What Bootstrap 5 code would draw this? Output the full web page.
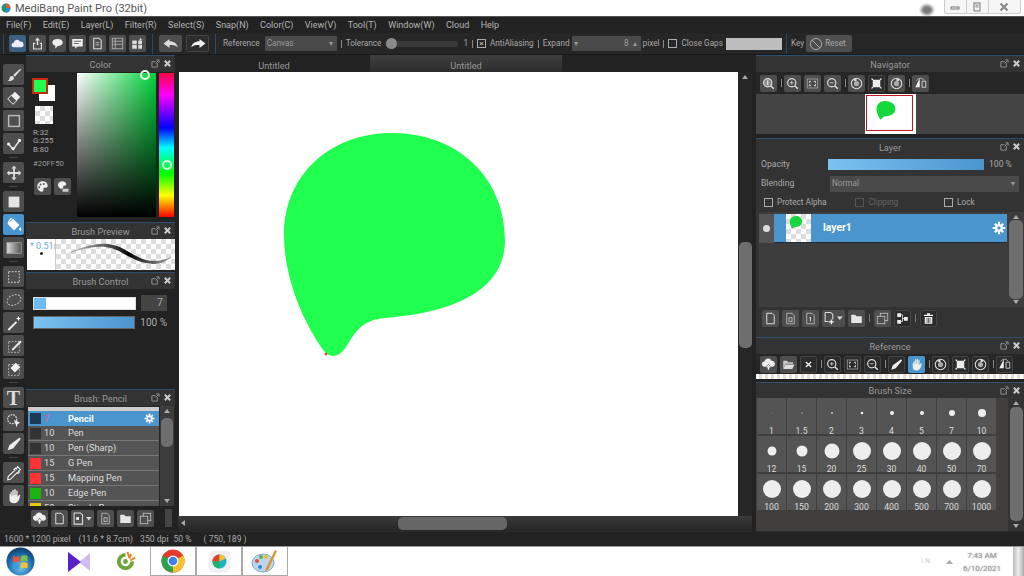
<!DOCTYPE html>
<html lang="en"><head><meta charset="utf-8"><title>MediBang Paint Pro</title>
<link href="https://cdn.jsdelivr.net/npm/bootstrap@5.3.0/dist/css/bootstrap.min.css" rel="stylesheet">
<style>
html,body{width:1024px;height:576px;overflow:hidden;margin:0}
body{background:#222;color:#aaa;font-family:Roboto,"Noto Sans",sans-serif;font-size:9px;line-height:1}
svg{display:block}
.ttl{height:16px;background:#fff;color:#555;font-size:11px;padding-left:1px}
.wctl{height:14px;align-self:flex-start;border:1px solid #ccc;border-top:0;border-radius:0 0 3px 3px;width:77px;margin-right:3px;background:#f6f6f6}
.wctl span{flex:1 1 0;display:flex;align-items:center;justify-content:center;border-right:1px solid #ccc}
.wctl span:last-child{flex:1.5 1 0;border:0}
.smudge{width:12px;height:10px;border-radius:50%;background:#777;filter:blur(1.5px);margin-left:auto;margin-right:11px;margin-top:4px}
.mbar{height:17px;background:#222;color:#b4b4b4;font-size:9px;border-top:1px solid #555;gap:11.4px;padding-left:6px}
.tbar{height:22px;background:#262626;color:#a8a8a8;font-size:8.2px;border-bottom:1px solid #1a1a1a;padding-left:3px;position:relative}
.bsep{width:1px;height:20px;background:#2c4a66}
.psep{width:1px;height:8px;background:#888;margin:0 4px}
.ib{width:17px;height:17px;background:#4e4e4e;border-radius:2px;display:flex;align-items:center;justify-content:center;flex:none}
.ib.dk{background:#2c2c2c;outline:1px solid #444;outline-offset:-1px}
.ib.on{background:#4a95ce}
.ib.cl{background:#3d5f80}
.ib.wide{width:23px}
.gp3{gap:3px}
.ml6{margin-left:6px}.ml7{margin-left:7px}.ml4{margin-left:4px}.ml5{margin-left:5px}.ml2{margin-left:2px}
.sel{background:#4a4a4a;color:#999;height:15px;border-radius:1px;display:flex;align-items:center;padding:0 4px 0 2px;justify-content:space-between;font-size:8.2px}
.sel.rfs{width:72px}
.track{width:73px;height:6px;background:#3a3a3a;border-radius:3px;margin-left:4px;position:relative}
.knob{position:absolute;left:1px;top:-2.5px;width:11px;height:11px;border-radius:50%;background:#8a8a8a}
.cb{width:9px;height:9px;border:1px solid #aaa;flex:none}
.cbx{display:flex;align-items:center;justify-content:center;color:#ccc;font-size:8px}
.num{width:69px;justify-content:space-between}
.gapbox{width:56px;height:12px;background:#bdbdbd;margin-left:3px}
.rst{width:46px;height:17px;background:#4e4e4e;border-radius:2px;display:flex;align-items:center;gap:2px;padding-left:3px;color:#aaa;margin-left:2px}
.main{height:476px}
.tools{width:26px;flex:none;padding:9px 0 0 3px;gap:2px}
.tools .ib{width:21px;height:21px;position:relative}
.tools .ib.wd{margin-top:6px}
.tools .ib.wd::before{content:"";position:absolute;left:6px;top:-5px;width:9px;height:1px;background:#444}
.tools .tt{font-family:"Liberation Serif",serif;font-weight:700;font-size:20px;color:#ddd;margin-top:7px}
.tools .tt::before{top:-6px}
.lcol{width:152px;flex:none;padding-right:3px}
.phd{height:17px;background:#333;border-top:1px solid #2e4f6c;color:#999;font-size:9.2px;position:relative;flex:none;padding-top:1px}
.phd.sm{height:16px}
.pins{position:absolute;right:3px;top:3px;gap:3px}
.colr{height:150px;flex:none}
.cleft{width:51px;flex:none;position:relative;padding:34px 0 0 9px}
.fg{position:absolute;left:6px;top:6px;width:16px;height:16px;background:#20ff50;border:2px solid #c62a10;z-index:1}
.bg{position:absolute;left:13px;top:13px;width:16px;height:16px;background:#fff}
.chk{background-color:#fff;background-image:conic-gradient(#ddd 25%,#fff 0 50%,#ddd 0 75%,#fff 0);background-size:10px 10px}
.chks{width:18px;height:18px;margin-bottom:5px}
.rgb{color:#aaa;font-size:7.8px;line-height:8.3px;margin-left:-2px}
.hex{color:#999;font-size:7.8px;margin:6px 0 10px -2px}
.rgbb{margin-left:-1px}
.sv{width:79px;height:144px;background:linear-gradient(to top,#000,rgba(0,0,0,0)),linear-gradient(to right,#fff,#00d43a);position:relative;margin-top:1px}
.hue{width:15px;height:144px;margin:1px 0 0 3px;background:linear-gradient(to bottom,#ff0040,#f0f 15%,#00f 38%,#0ff 52%,#0f0 70%,#ff0 85%,#f00);position:relative}
.ring{position:absolute;width:10px;height:10px;border-radius:50%;border:2px solid #e6ffe6}
.ring.a{left:63px;top:-3px}.ring.b{left:2.5px;top:87px}
.prev{height:31px;background:#fff;margin:0 0 0 1px;flex:none}
.psz{width:29px;border-right:1px solid #ccc;color:#6aa9d8;font-size:9px;padding:3px 0 0 3px;overflow:hidden;white-space:nowrap;position:relative}
.pdot{position:absolute;left:13px;top:13px;width:3px;height:3px;border-radius:50%;background:#222}
.pchk{flex:1;min-width:0;position:relative}
.bch{margin-top:2px}
.bctl{height:100px;flex:none;padding:6px 8px 0 7px}
.bar1{height:13px;width:105px;background:#fff;border:1px solid #ddd;position:relative;overflow:hidden}
.bar1 i{position:absolute;left:0;top:0;bottom:0;width:12px;background:#6dbbf0}
.val{width:26px;height:16px;background:#444;color:#aaa;text-align:right;padding:3px 4px 0 0;font-size:10.5px;margin-left:5px}
.vrow{margin-bottom:5px}
.bar2{height:13px;width:103px;background:linear-gradient(to right,#7cc2f2,#4a95ce);border:1px solid #666}
.pct{color:#aaa;font-size:10px;margin-left:5px;white-space:nowrap}
.blist{height:100px;flex:none;padding-left:2px;position:relative;background:#262626}
.rows{width:131px;background:#545454;overflow:hidden;margin-top:1px;padding-top:4px;position:relative}
.rows::before{content:"";position:absolute;left:0;right:0;top:0;height:4px;background:#ccc}
.brow{height:15px;display:flex;align-items:center;border-bottom:1px solid #777;color:#ddd;font-size:9.2px;padding-left:2px}
.brow.on{background:#4a95ce;color:#fff;font-weight:700;border:0}
.brow b{width:11px;height:11px;background:#333;flex:none;margin-right:3px;display:block}
.brow b.r{background:#f33}.brow b.g{background:#1ab312}.brow b.y{background:#e8c815}.brow.on b{background:#1d3a55}
.brow em{font-style:normal;width:24px;flex:none}
.brow.on em{color:#e8608a;font-weight:400}
.sbar{background:#3c3c3c;position:relative;display:flex;flex-direction:column;align-items:center}
.sb1{width:14px;margin-left:1px}
.thumb{background:#6e6e6e;border-radius:5px;position:absolute}
.tb1{left:1px;right:1px;top:12px;height:29px}
.arr{width:0;height:0;border-left:3px solid transparent;border-right:3px solid transparent}
.arr.u{border-bottom:4px solid #aaa;margin-top:3px}
.arr.d{border-top:4px solid #aaa;position:absolute;bottom:3px}
.lad{left:5px}
.ibar{height:24px;flex:none;padding-left:5px;gap:3px;position:relative}
.grab{width:7px;height:18px;background:#444;border-radius:1px;margin-left:8px}
.cen{flex:1;min-width:0}
.tabs{height:17px;flex:none;color:#999;font-size:9.2px;background:#222}
.tab{width:192px;text-align:center;padding-top:6px}
.tab.act{background:linear-gradient(#3f3f3f,#2c2c2c)}
.cv{flex:1;min-height:0}
.paper{flex:1;background:#fff;position:relative;min-width:0;border-left:1px solid #222}
.paper svg{position:absolute;left:0;top:0}
.vs{width:14px;flex:none;position:relative;background:#262626}
.vt{left:1px;right:0;top:170px;height:106px}
.hs{height:15px;flex:none;position:relative;background:linear-gradient(#3a3a3a,#262626)}
.ht{left:220px;width:109px;top:1px;height:13px;background:#666}
.harr{position:absolute;left:3px;top:4px;width:0;height:0;border-top:3px solid transparent;border-bottom:3px solid transparent;border-right:4px solid #aaa}
.rcol{width:268px;margin-left:4px;flex:none}
.ntb{height:22px;background:#262626;padding-left:4px;flex:none}
.ntb.sm{height:20px}
.ntb .ib{margin-right:3px}
.ntb .psep{margin:0 2px 0 1px}
.nprev{height:40px;background:#444;flex:none;justify-content:center}
.npic{width:51px;height:40px;background:#fff;display:flex;margin-left:1px}
.npic svg{border:1px solid #c8141e;margin:1px}
.lgap{height:4px;flex:none}
.lay{height:182px;flex:none;background:#333;color:#aaa}
.lrow{height:19px;padding-left:5px;font-size:8.6px;flex:none}
.lab{width:67px}
.bar3{height:11px;width:156px;background:linear-gradient(to right,#7cc2f2,#4a95ce)}
.sel.bl{width:189px;height:16px;color:#999;margin-left:2px}
.pc3{margin-left:5px}
.chkrow{height:19px;padding-left:8px;font-size:8.2px;flex:none}
.cx2{margin-left:29px;color:#666}.cx2 .cb{border-color:#555}
.cx3{margin-left:46px}
.llist{height:95px;flex:none;position:relative;background:#3d3d3d;margin-left:3px;padding-top:2px}
.lhd{height:29px;background:#4a95ce;border-bottom:1px solid #1d2c3a;color:#fff;font-weight:700;font-size:10.4px;width:248px}
.vis{width:15px;height:29px;background:#555;display:flex;align-items:center;justify-content:center}
.vis i{width:7px;height:7px;border-radius:50%;background:#ddd}
.lth{width:25px;height:28px;margin:0 12px;flex:none}
.gr2{margin-right:1px}
.ls{position:absolute;right:0;top:0;bottom:0;width:16px;background:#3c3c3c}
.tlay{left:1px;right:1px;top:8px;bottom:8px}
.lbar{height:22px;padding-left:6px;gap:3px;flex:none}
.lbar .sp{width:1px;height:8px;background:#777;margin:0 1px}
.strip{height:5px;margin-bottom:3px;flex:none;background-image:repeating-linear-gradient(90deg,#fff 0 3px,#e5ddd6 3px 6px)}
.bs{flex:1;min-height:0;background:#403f3e;position:relative}
.bgrid{display:grid;grid-template-columns:repeat(8,29px);grid-auto-rows:36px;column-gap:1px;row-gap:2px;padding:0 0 0 1px;width:252px}
.cell{background:#545454;display:flex;flex-direction:column;align-items:center;color:#ddd;font-size:8.6px;position:relative;padding-top:5px}
.cell svg{flex:none}
.cell span{position:absolute;bottom:-1px;left:0;right:0;text-align:center;line-height:8px}
.bscroll{position:absolute;right:0;top:0;bottom:0;width:16px;background:#333}
.tbs{left:2px;right:1px;top:9px;height:114px}
.status{height:15px;background:#222;color:#aaa;font-size:8.6px;padding-left:4px;border-top:1px solid #2a2a2a}
.s1{margin-left:8px}.s2{margin-left:7px}.s3{margin-left:5px}.s4{margin-left:12px}
.task{height:30px;background:#fff;position:relative;border-top:1px solid #999}
.orb{margin-left:6px;flex:none}
.grip{width:4px;height:24px;margin-left:12px;background-image:radial-gradient(#888 40%,transparent 45%);background-size:2px 2px}
.tpur{margin-left:17px}
.tcoc{margin-left:24px}
.tchr{margin-left:13px}
.tk{width:46px;height:29px;display:flex;align-items:center;justify-content:center;flex:none}
.tk.b{border:1px solid #aaa;border-top:0}
.clk{color:#999;font-size:8px;text-align:center;line-height:13px;text-shadow:0 0 2px #aaa}
.shd{width:11px;height:30px;background:linear-gradient(90deg,#bbb,#eee,#aaa);margin-left:12px}
.ssq{width:4px;height:24px;margin-right:7px;background-image:radial-gradient(#777 40%,transparent 45%);background-size:2px 2px}
.tray{color:#ccc;font-size:7px;margin-right:15px}
.tcar{margin-right:9px}
</style></head><body>
<svg width="0" height="0" class="position-absolute"><defs>
<symbol id="brush" viewBox="0 0 20 20"><path d="M17 3 9 10l2 2 7-8zM8 11c-2 0-3 1-3 3 0 1-1 2-2 2 2 1 6 1 7-2 .3-1-.6-3-2-3z" fill="#ddd"/></symbol>
<symbol id="eraser" viewBox="0 0 20 20"><path d="M11 3l6 6-8 8-6-6z" fill="#eee"/><path d="M7 7l6 6-4 4-6-6z" fill="#555"/><path d="M7 7l6 6-4 4-6-6z" fill="none" stroke="#eee"/></symbol>
<symbol id="rect" viewBox="0 0 20 20"><rect x="4" y="4" width="12" height="12" fill="none" stroke="#bbb" stroke-width="1.6"/></symbol>
<symbol id="conn" viewBox="0 0 20 20"><path d="M4 10l5 6 8-11" fill="none" stroke="#ddd" stroke-width="1.8"/><circle cx="4" cy="10" r="1.8" fill="#eee"/><circle cx="9" cy="15" r="1.8" fill="#eee"/><circle cx="16" cy="6" r="1.8" fill="#eee"/></symbol>
<symbol id="move" viewBox="0 0 20 20"><path d="M10 2l3 3h-2v4h4V7l3 3-3 3v-2h-4v4h2l-3 3-3-3h2v-4H5v2l-3-3 3-3v2h4V5H7z" fill="#ddd"/></symbol>
<symbol id="fill" viewBox="0 0 20 20"><rect x="4" y="4" width="12" height="12" fill="#e4e4e4"/></symbol>
<symbol id="bucket" viewBox="0 0 20 20"><path d="M9 3l7 7-6 6-7-7z" fill="#fff"/><path d="M3 9c0-3 2-6 4-7l1 1c-2 1-4 3-3 6z" fill="#fff"/><path d="M17 12c1 2 2 3 1 4s-3 0-2-2z" fill="#fff"/></symbol>
<symbol id="grad" viewBox="0 0 20 20"><defs><linearGradient id="gg"><stop offset="0" stop-color="#ddd"/><stop offset="1" stop-color="#555"/></linearGradient></defs><rect x="2" y="4" width="16" height="12" fill="url(#gg)" stroke="#999"/></symbol>
<symbol id="marq" viewBox="0 0 20 20"><rect x="4" y="4" width="12" height="12" fill="none" stroke="#bbb" stroke-dasharray="2 1.5" stroke-width="1.2"/></symbol>
<symbol id="lasso" viewBox="0 0 20 20"><ellipse cx="10" cy="10" rx="8" ry="5.5" transform="rotate(-25 10 10)" fill="none" stroke="#bbb" stroke-dasharray="2 1.5" stroke-width="1.2"/></symbol>
<symbol id="wand" viewBox="0 0 20 20"><path d="M3 17L12 8l1.5 1.5-9 9z" fill="#eee"/><path d="M15 2l.8 2.4L18 5l-2.2.8L15 8l-.8-2.2L12 5l2.2-.6z" fill="#fff"/></symbol>
<symbol id="spen" viewBox="0 0 20 20"><rect x="4" y="5" width="12" height="12" fill="none" stroke="#bbb" stroke-dasharray="2 1.5"/><path d="M8 13l9-9 1.5 1.5-9 9-2 .5z" fill="#eee"/></symbol>
<symbol id="serase" viewBox="0 0 20 20"><rect x="4" y="5" width="12" height="12" fill="none" stroke="#bbb" stroke-dasharray="2 1.5"/><path d="M12 3l5 5-6 6-5-5z" fill="#eee"/></symbol>
<symbol id="shp" viewBox="0 0 20 20"><circle cx="8" cy="8" r="5" fill="none" stroke="#ddd" stroke-dasharray="2 1" stroke-width="1.3"/><path d="M10 9l7 3-3 1.2L13 17z" fill="#eee"/></symbol>
<symbol id="pen" viewBox="0 0 20 20"><path d="M16 3l1.5 1.5L9 15l-6 2 2-6z" fill="#eee"/></symbol>
<symbol id="drop" viewBox="0 0 20 20"><path d="M14 3l3 3-2 2 1 1-1.5 1.5-1-1L6 17l-3 .5L3.500 14l7.500-7-1-1L11.500 4.500l1 1z" fill="none" stroke="#eee" stroke-width="1.3"/></symbol>
<symbol id="hand" viewBox="0 0 20 20"><path d="M5 8v6c0 3 2 4 5 4s5-2 6-5l1-4c0-1-1-1-1.500-.2L14 11V4.500c0-1-1.500-1-1.500 0V9h-.6V3c0-1-1.600-1-1.600 0v6h-.6V3.800c0-1-1.600-1-1.600 0V10h-.6V6c0-1-1.500-1-1.500 2z" fill="#eee"/></symbol>
<symbol id="cloud" viewBox="0 0 20 20"><path d="M5 15a3 3 0 010-6 4.500 4.500 0 018.500-1.500A3.800 3.800 0 0115 15z" fill="#eef"/></symbol>
<symbol id="share" viewBox="0 0 20 20"><path d="M10 2l3.500 4H11v6H9V6H6.500zM4 9h3v1.500H5.500v6h9v-6H13V9h3v9H4z" fill="#ddd"/></symbol>
<symbol id="bub" viewBox="0 0 20 20"><path d="M10 4c4.500 0 7 2 7 4.800 0 3-3 4.700-7 4.700l-3 3v-3.500c-2-.8-4-2-4-4.200C3 6 5.500 4 10 4z" fill="#eee"/></symbol>
<symbol id="note" viewBox="0 0 20 20"><path d="M3 4h14v10h-7l-3 3v-3H3z" fill="#eee"/><path d="M5.500 7h9M5.500 10h6" stroke="#555" stroke-width="1.2"/></symbol>
<symbol id="doc" viewBox="0 0 20 20"><path d="M5 3h7l3 3v11H5z" fill="none" stroke="#ddd" stroke-width="1.4"/><path d="M7.500 9h5M7.500 12h5" stroke="#ddd"/></symbol>
<symbol id="list" viewBox="0 0 20 20"><rect x="3" y="3" width="14" height="14" fill="none" stroke="#bbb"/><path d="M3 7h14M3 11h14M7 3v14" stroke="#bbb"/></symbol>
<symbol id="wgrid" viewBox="0 0 20 20"><path d="M3 6h6v5H3zM11 6h5v5h-5zM3 12h6v5H3zM11 12h5v5h-5z" fill="#ddd"/><path d="M14 2l1 2 2 .5-2 .5-1 1.500-.5-1.500-2-.5 2-.5z" fill="#ddd"/></symbol>
<symbol id="undo" viewBox="0 0 24 20"><path d="M10 4L2 10l8 6v-4c4 0 8 0 11 3-1-5-5-8-11-8z" fill="#ddd"/></symbol>
<symbol id="redo" viewBox="0 0 24 20"><path d="M14 4l8 6-8 6v-4c-4 0-8 0-11 3 1-5 5-8 11-8z" fill="#eee"/></symbol>
<symbol id="nono" viewBox="0 0 20 20"><circle cx="10" cy="10" r="8" fill="none" stroke="#bbb" stroke-width="1.2"/><path d="M4.500 4.500l11 11" stroke="#bbb" stroke-width="1.2"/></symbol>
<symbol id="zi" viewBox="0 0 20 20"><circle cx="9" cy="9" r="5.500" fill="none" stroke="#ddd" stroke-width="1.6"/><path d="M13 13l4 4" stroke="#ddd" stroke-width="2"/><path d="M6.500 9h5M9 6.500v5" stroke="#ddd"/></symbol>
<symbol id="zo" viewBox="0 0 20 20"><circle cx="9" cy="9" r="5.500" fill="none" stroke="#ddd" stroke-width="1.6"/><path d="M13 13l4 4" stroke="#ddd" stroke-width="2"/><path d="M6.500 9h5" stroke="#ddd"/></symbol>
<symbol id="z1" viewBox="0 0 20 20"><circle cx="9" cy="9" r="5.500" fill="#888" stroke="#ddd" stroke-width="1.6"/><path d="M13 13l4 4" stroke="#ddd" stroke-width="2"/><path d="M9 6v6" stroke="#fff" stroke-width="1.3"/></symbol>
<symbol id="fit" viewBox="0 0 20 20"><rect x="3" y="4" width="14" height="12" fill="none" stroke="#aaa"/><path d="M6 7h2M6 7v2M14 7h-2M14 7v2M6 13h2M6 13v-2M14 13h-2M14 13v-2" stroke="#ddd" stroke-width="1.3"/></symbol>
<symbol id="rl" viewBox="0 0 20 20"><circle cx="10" cy="10" r="7" fill="none" stroke="#ddd" stroke-width="1.4"/><path d="M5 5l5-2v5z" fill="#ddd"/><circle cx="10" cy="10" r="3.500" fill="#aaa"/></symbol>
<symbol id="rr" viewBox="0 0 20 20"><circle cx="10" cy="10" r="7" fill="none" stroke="#ddd" stroke-width="1.4"/><path d="M15 5l-5-2v5z" fill="#ddd"/><circle cx="10" cy="10" r="3.500" fill="#aaa"/></symbol>
<symbol id="fitc" viewBox="0 0 20 20"><path d="M5 5h10v10H5z" fill="#eee"/><path d="M3 3l3 1-2 2zM17 3l-3 1 2 2zM3 17l3-1-2-2zM17 17l-3-1 2-2z" fill="#fff"/></symbol>
<symbol id="flip" viewBox="0 0 20 20"><path d="M9 3L3 15h6z" fill="#eee"/><path d="M12 7h5v8h-5z" fill="none" stroke="#eee"/><path d="M5 6c2-4 8-4 10 0" fill="none" stroke="#ddd"/></symbol>
<symbol id="nf" viewBox="0 0 20 20"><path d="M5 3h7l3 3v11H5z" fill="none" stroke="#ddd" stroke-width="1.3"/></symbol>
<symbol id="nf1" viewBox="0 0 20 20"><path d="M5 3h7l3 3v11H5z" fill="none" stroke="#ccc"/><path d="M10 8v6M8.500 9.500L10 8" stroke="#ddd" stroke-width="1.2" fill="none"/></symbol>
<symbol id="nf8" viewBox="0 0 20 20"><path d="M5 3h7l3 3v11H5z" fill="none" stroke="#ccc"/><rect x="8" y="9" width="4" height="5" fill="none" stroke="#ddd"/></symbol>
<symbol id="fold" viewBox="0 0 20 20"><path d="M3 5h5l2 2h7v9H3z" fill="#e6e6e6"/></symbol>
<symbol id="dup" viewBox="0 0 20 20"><rect x="7" y="3" width="10" height="10" fill="none" stroke="#ccc"/><rect x="3" y="7" width="10" height="10" fill="#4e4e4e" stroke="#ccc"/></symbol>
<symbol id="merge" viewBox="0 0 20 20"><path d="M3 3h5v5H3zM3 12h5v5H3zM12 8h5v5h-5z" fill="#eee"/><path d="M8 5h2v9H8M10 10h2" stroke="#eee" fill="none"/></symbol>
<symbol id="trash" viewBox="0 0 20 20"><path d="M4 5h12v1.500H4zM8 3h4v2H8zM5 8h10v9H5z" fill="#eee"/><path d="M8 9v7M10 9v7M12 9v7" stroke="#333" stroke-width=".9"/></symbol>
<symbol id="up" viewBox="0 0 20 20"><path d="M5 13a3.500 3.500 0 01-.5-7A5 5 0 0114 5a4 4 0 011 8h-2l-3-4-3 4z" fill="#eee"/><path d="M10 10l3 4h-2v3H9v-3H7z" fill="#eee"/></symbol>
<symbol id="x" viewBox="0 0 20 20"><path d="M6 6l8 8M14 6l-8 8" stroke="#eee" stroke-width="2.200"/></symbol>
<symbol id="ofold" viewBox="0 0 20 20"><path d="M3 5h5l2 2h6v2H6l-3 7z" fill="#ccc"/><path d="M6 10h12l-3 6H3z" fill="#ddd"/></symbol>
<symbol id="gear" viewBox="0 0 20 20"><circle cx="10" cy="10" r="5.500" fill="#fff"/><path d="M10 1v18M1 10h18M4 4l12 12M16 4L4 16" stroke="#fff" stroke-width="3"/><circle cx="10" cy="10" r="2.500" fill="#4a95ce"/></symbol>
<symbol id="pop" viewBox="0 0 10 10"><path d="M7 4.500V9H1V3h4" fill="none" stroke="#999"/><path d="M5 5l3.500-3.500M6 1h3v3" fill="none" stroke="#999"/></symbol>
<symbol id="cls" viewBox="0 0 10 10"><path d="M2 2l6 6M8 2L2 8" stroke="#ccc" stroke-width="2.200"/></symbol>
</defs></svg>

<div class="ttl d-flex align-items-center">
 <svg width="10" height="10" viewBox="0 0 10 10" class="me-1"><circle cx="5" cy="5" r="4.500" fill="#1a9a6a"/><path d="M5 .5A4.500 4.500 0 0 1 9.500 5H5z" fill="#e25a3a"/><path d="M5 5h4.500A4.500 4.500 0 0 1 5 9.500z" fill="#2b8cd0"/></svg>
 <span>MediBang Paint Pro (32bit)</span>
 <div class="smudge"></div>
 <div class="wctl d-flex">
  <span><svg width="10" height="6"><rect x="1" y="3" width="8" height="2" fill="none" stroke="#777"/></svg></span>
  <span><svg width="10" height="10"><rect x="2" y="1" width="6" height="8" fill="none" stroke="#777"/><rect x="4" y="3" width="2" height="2" fill="none" stroke="#999"/></svg></span>
  <span><svg width="10" height="10"><path d="M1.500 1.500l7 7M8.500 1.500l-7 7" stroke="#888" stroke-width="2"/></svg></span>
 </div>
</div>
<div class="mbar d-flex align-items-center"><span>File(F)</span><span>Edit(E)</span><span>Layer(L)</span><span>Filter(R)</span><span>Select(S)</span><span>Snap(N)</span><span>Color(C)</span><span>View(V)</span><span>Tool(T)</span><span>Window(W)</span><span>Cloud</span><span>Help</span></div>
<div class="tbar d-flex align-items-center">
 <div class="bsep"></div>
 <div class="d-flex gp3 ml5">
  <div class="ib cl"><svg width="15" height="15"><use href="#cloud"/></svg></div>
  <div class="ib"><svg width="15" height="15"><use href="#share"/></svg></div>
  <div class="ib"><svg width="15" height="15"><use href="#bub"/></svg></div>
  <div class="ib"><svg width="15" height="15"><use href="#note"/></svg></div>
  <div class="ib"><svg width="15" height="15"><use href="#doc"/></svg></div>
  <div class="ib"><svg width="15" height="15"><use href="#list"/></svg></div>
  <div class="ib"><svg width="15" height="15"><use href="#wgrid"/></svg></div>
 </div>
 <div class="bsep ml6"></div>
 <div class="ib wide ml6"><svg width="18" height="15"><use href="#undo"/></svg></div>
 <div class="ib wide dk ml4"><svg width="18" height="15"><use href="#redo"/></svg></div>
 <div class="bsep ml6"></div>
 <span class="ml7">Reference</span>
 <div class="sel rfs ml5"><span>Canvas</span><span>▾</span></div>
 <div class="psep"></div><span>Tolerance</span>
 <div class="track"><div class="knob"></div></div>
 <span class="ml5">1</span><div class="psep"></div>
 <div class="cb cbx">×</div><span class="ml4">AntiAliasing</span>
 <div class="psep"></div><span>Expand</span>
 <div class="sel num ml2"><span>▾</span><span>8 &nbsp;▴</span></div>
 <span class="ml2">pixel</span><div class="psep"></div>
 <div class="cb"></div><span class="ml4">Close Gaps</span>
 <div class="gapbox"></div>
 <div class="bsep ml4"></div>
 <span class="ml4">Key</span>
 <div class="rst"><svg width="14" height="14"><use href="#nono"/></svg><span>Reset</span></div>
</div>

<div class="main d-flex">
 <div class="tools d-flex flex-column">
  <div class="ib"><svg width="18" height="18"><use href="#brush"/></svg></div>
  <div class="ib"><svg width="18" height="18"><use href="#eraser"/></svg></div>
  <div class="ib"><svg width="18" height="18"><use href="#rect"/></svg></div>
  <div class="ib"><svg width="18" height="18"><use href="#conn"/></svg></div>
  <div class="ib wd"><svg width="18" height="18"><use href="#move"/></svg></div>
  <div class="ib wd"><svg width="18" height="18"><use href="#fill"/></svg></div>
  <div class="ib on"><svg width="18" height="18"><use href="#bucket"/></svg></div>
  <div class="ib"><svg width="18" height="18"><use href="#grad"/></svg></div>
  <div class="ib wd"><svg width="18" height="18"><use href="#marq"/></svg></div>
  <div class="ib"><svg width="18" height="18"><use href="#lasso"/></svg></div>
  <div class="ib"><svg width="18" height="18"><use href="#wand"/></svg></div>
  <div class="ib"><svg width="18" height="18"><use href="#spen"/></svg></div>
  <div class="ib"><svg width="18" height="18"><use href="#serase"/></svg></div>
  <div class="ib wd tt">T</div>
  <div class="ib"><svg width="18" height="18"><use href="#shp"/></svg></div>
  <div class="ib"><svg width="18" height="18"><use href="#pen"/></svg></div>
  <div class="ib wd"><svg width="18" height="18"><use href="#drop"/></svg></div>
  <div class="ib"><svg width="18" height="18"><use href="#hand"/></svg></div>
 </div>

 <div class="lcol d-flex flex-column">
  <div class="phd d-flex align-items-center justify-content-center">Color<div class="pins d-flex"><svg width="9" height="9"><use href="#pop"/></svg><svg width="9" height="9"><use href="#cls"/></svg></div></div>
  <div class="colr d-flex">
   <div class="cleft">
    <div class="fg"></div><div class="bg"></div>
    <div class="chks chk"></div>
    <div class="rgb">R:32<br>G:255<br>B:80</div>
    <div class="hex">#20FF50</div>
    <div class="d-flex gp3 rgbb">
     <div class="ib"><svg width="13" height="13" viewBox="0 0 20 20"><path d="M10 2c5 0 8 3 8 7 0 3-3 3-5 3-1.500 0-2 1-1.500 2 .5 2-.5 4-2.500 4-4 0-7-4-7-8s3-8 8-8z" fill="#eee"/><circle cx="7" cy="7" r="1.500" fill="#555"/><circle cx="12" cy="6" r="1.500" fill="#555"/><circle cx="5" cy="11" r="1.500" fill="#555"/></svg></div>
     <div class="ib"><svg width="15" height="15" viewBox="0 0 20 20"><path d="M9 3c4 0 6 2 6 4 0 2-2 2-3 2-1 0-1 1-1 1.500 0 1.500-1 2.500-2 2.500-3 0-5-3-5-5s2-5 5-5z" fill="#eee"/><rect x="10" y="13" width="8" height="4" fill="#ccc"/></svg></div>
    </div>
   </div>
   <div class="sv"><div class="ring a"></div></div>
   <div class="hue"><div class="ring b"></div></div>
  </div>
  <div class="phd d-flex align-items-center justify-content-center">Brush Preview<div class="pins d-flex"><svg width="9" height="9"><use href="#pop"/></svg><svg width="9" height="9"><use href="#cls"/></svg></div></div>
  <div class="prev d-flex">
   <div class="psz">* 0.51m<div class="pdot"></div></div>
   <div class="pchk chk">
    <svg width="119" height="31" viewBox="0 0 122 31"><defs><linearGradient id="st"><stop offset="0" stop-color="#888" stop-opacity=".4"/><stop offset=".6" stop-color="#000"/><stop offset="1" stop-color="#555" stop-opacity=".5"/></linearGradient></defs><path d="M8 16C26 8 42 3 55 5 72 7 82 22 100 22 110 22 116 19 120 17 112 23 106 26 98 25 78 24 68 10 52 8 38 6 24 11 8 16z" fill="url(#st)"/></svg>
   </div>
  </div>
  <div class="phd bch d-flex align-items-center justify-content-center">Brush Control<div class="pins d-flex"><svg width="9" height="9"><use href="#pop"/></svg><svg width="9" height="9"><use href="#cls"/></svg></div></div>
  <div class="bctl">
   <div class="d-flex align-items-center vrow"><div class="bar1"><i></i></div><div class="val">7</div></div>
   <div class="d-flex align-items-center"><div class="bar2"></div><div class="pct">100 %</div></div>
  </div>
  <div class="phd d-flex align-items-center justify-content-center">Brush: Pencil<div class="pins d-flex"><svg width="9" height="9"><use href="#pop"/></svg><svg width="9" height="9"><use href="#cls"/></svg></div></div>
  <div class="blist d-flex">
   <div class="rows">
    <div class="brow on"><b></b><em>7</em><span class="flex-grow-1">Pencil</span><svg width="11" height="11" class="me-1"><use href="#gear"/></svg></div>
    <div class="brow"><b></b><em>10</em><span>Pen</span></div>
    <div class="brow"><b></b><em>10</em><span>Pen (Sharp)</span></div>
    <div class="brow"><b class="r"></b><em>15</em><span>G Pen</span></div>
    <div class="brow"><b class="r"></b><em>15</em><span>Mapping Pen</span></div>
    <div class="brow"><b class="g"></b><em>10</em><span>Edge Pen</span></div>
    <div class="brow"><b class="y"></b><em>50</em><span>Stipple Pen</span></div>
   </div>
   <div class="sbar sb1"><div class="arr u"></div><div class="thumb tb1"></div><div class="arr d"></div></div>
  </div>
  <div class="ibar d-flex align-items-center">
   <div class="ib"><svg width="15" height="15"><use href="#up"/></svg></div>
   <div class="ib"><svg width="15" height="15"><use href="#nf"/></svg></div>
   <div class="ib wide"><svg width="21" height="13" viewBox="0 0 30 18"><path d="M3 1h9l3 3v13H3z" fill="none" stroke="#ddd" stroke-width="1.500"/><rect x="6" y="7" width="4" height="4" fill="#eee"/><path d="M20 7h8l-4 5z" fill="#ddd"/></svg></div>
   <div class="ib"><svg width="15" height="15"><use href="#nf8"/></svg></div>
   <div class="ib"><svg width="15" height="15"><use href="#fold"/></svg></div>
   <div class="ib"><svg width="15" height="15"><use href="#dup"/></svg></div>
   <div class="grab"></div>
  </div>
 </div>

 <div class="cen d-flex flex-column">
  <div class="tabs d-flex"><div class="tab">Untitled</div><div class="tab act">Untitled</div></div>
  <div class="cv d-flex">
   <div class="paper">
    <svg width="559" height="443" viewBox="179 72 559 443"><path d="M392 133C330 133 284 175 284 235 284 280 305 325 324 351 331 359 339 357 346 347 356 331 362 320 385 318 420 315 505 305 505 240 505 180 460 133 392 133Z" fill="#20ff50"/><circle cx="326" cy="354" r="1.500" fill="#d8553a"/></svg>
   </div>
   <div class="vs"><div class="arr u ms-1"></div><div class="thumb vt"></div></div>
  </div>
  <div class="hs"><div class="harr"></div><div class="thumb ht"></div></div>
 </div>

 <div class="rcol d-flex flex-column">
  <div class="phd d-flex align-items-center justify-content-center">Navigator<div class="pins d-flex"><svg width="9" height="9"><use href="#pop"/></svg><svg width="9" height="9"><use href="#cls"/></svg></div></div>
  <div class="ntb d-flex align-items-center">
   <div class="ib"><svg width="15" height="15"><use href="#z1"/></svg></div><div class="psep"></div>
   <div class="ib"><svg width="15" height="15"><use href="#zi"/></svg></div>
   <div class="ib"><svg width="15" height="15"><use href="#fit"/></svg></div>
   <div class="ib"><svg width="15" height="15"><use href="#zo"/></svg></div><div class="psep"></div>
   <div class="ib"><svg width="15" height="15"><use href="#rl"/></svg></div>
   <div class="ib dk"><svg width="15" height="15"><use href="#fitc"/></svg></div>
   <div class="ib"><svg width="15" height="15"><use href="#rr"/></svg></div><div class="psep"></div>
   <div class="ib"><svg width="15" height="15"><use href="#flip"/></svg></div>
  </div>
  <div class="nprev d-flex"><div class="npic"><svg width="47" height="36" viewBox="-17 -12 144 110"><path d="M40 4C20 4 12 20 13 32c1 14 7 24 12 31 3 4 8-8 14-9 14-1 35-6 35-25C74 13 59 4 40 4z" fill="#14d83e"/></svg></div></div>
  <div class="lgap"></div>
  <div class="phd d-flex align-items-center justify-content-center">Layer<div class="pins d-flex"><svg width="9" height="9"><use href="#pop"/></svg><svg width="9" height="9"><use href="#cls"/></svg></div></div>
  <div class="lay">
   <div class="lrow d-flex align-items-center"><span class="lab">Opacity</span><div class="bar3"></div><span class="pc3">100 %</span></div>
   <div class="lrow d-flex align-items-center"><span class="lab">Blending</span><div class="sel bl"><span>Normal</span><span>▾</span></div></div>
   <div class="chkrow d-flex align-items-center"><div class="cb"></div><span class="ms-1">Protect Alpha</span><div class="cx2 d-flex align-items-center"><div class="cb me-1"></div>Clipping</div><div class="cx3 d-flex align-items-center"><div class="cb me-1"></div>Lock</div></div>
   <div class="llist">
    <div class="lhd d-flex align-items-center"><div class="vis"><i></i></div><div class="lth chk"><svg width="25" height="28" viewBox="0 0 25 28"><path d="M10 2C5 2 3 6 4 10c.5 2 2 3 2 5 2-2 2-2 5-2 4-1 5-3 5-6 0-3-3-5-6-5z" fill="#14d83e"/></svg></div><span class="flex-grow-1">layer1</span><svg width="14" height="14" class="gr2"><use href="#gear"/></svg></div>
    <div class="ls"><div class="arr u mx-auto"></div><div class="thumb tlay"></div><div class="arr d lad"></div></div>
   </div>
   <div class="lbar d-flex align-items-center">
    <div class="ib"><svg width="15" height="15"><use href="#nf"/></svg></div>
    <div class="ib"><svg width="15" height="15"><use href="#nf8"/></svg></div>
    <div class="ib"><svg width="15" height="15"><use href="#nf1"/></svg></div>
    <div class="ib wide"><svg width="21" height="14" viewBox="0 0 30 20"><path d="M3 2h8l3 3v7M3 2v13h5" fill="none" stroke="#ddd" stroke-width="1.500"/><path d="M12 12v7M8.500 15.500h7" stroke="#eee" stroke-width="2"/><path d="M20 8h8l-4 5z" fill="#ddd"/></svg></div>
    <div class="ib"><svg width="15" height="15"><use href="#fold"/></svg></div>
    <div class="sp"></div>
    <div class="ib"><svg width="15" height="15"><use href="#dup"/></svg></div>
    <div class="ib dk"><svg width="15" height="15"><use href="#merge"/></svg></div>
    <div class="sp"></div>
    <div class="ib dk"><svg width="15" height="15"><use href="#trash"/></svg></div>
   </div>
  </div>
  <div class="phd d-flex align-items-center justify-content-center">Reference<div class="pins d-flex"><svg width="9" height="9"><use href="#pop"/></svg><svg width="9" height="9"><use href="#cls"/></svg></div></div>
  <div class="ntb sm d-flex align-items-center">
   <div class="ib"><svg width="15" height="15"><use href="#up"/></svg></div>
   <div class="ib"><svg width="15" height="15"><use href="#ofold"/></svg></div>
   <div class="ib dk"><svg width="13" height="13"><use href="#x"/></svg></div><div class="psep"></div>
   <div class="ib dk"><svg width="15" height="15"><use href="#zi"/></svg></div>
   <div class="ib dk"><svg width="15" height="15"><use href="#fit"/></svg></div>
   <div class="ib dk"><svg width="15" height="15"><use href="#zo"/></svg></div><div class="psep"></div>
   <div class="ib dk"><svg width="15" height="15"><use href="#pen"/></svg></div>
   <div class="ib on"><svg width="15" height="15"><use href="#hand"/></svg></div><div class="psep"></div>
   <div class="ib dk"><svg width="15" height="15"><use href="#rl"/></svg></div>
   <div class="ib dk"><svg width="15" height="15"><use href="#fitc"/></svg></div>
   <div class="ib dk"><svg width="15" height="15"><use href="#rr"/></svg></div><div class="psep"></div>
   <div class="ib dk"><svg width="15" height="15"><use href="#flip"/></svg></div>
  </div>
  <div class="strip"></div>
  <div class="phd sm d-flex align-items-center justify-content-center">Brush Size<div class="pins d-flex"><svg width="9" height="9"><use href="#pop"/></svg><svg width="9" height="9"><use href="#cls"/></svg></div></div>
  <div class="bs">
   <div class="bgrid">
    <div class="cell"><svg width="20" height="20"><circle cx="10" cy="10" r=".5" fill="#888"/></svg><span>1</span></div>
    <div class="cell"><svg width="20" height="20"><circle cx="10" cy="10" r=".8" fill="#aaa"/></svg><span>1.5</span></div>
    <div class="cell"><svg width="20" height="20"><circle cx="10" cy="10" r="1" fill="#ccc"/></svg><span>2</span></div>
    <div class="cell"><svg width="20" height="20"><circle cx="10" cy="10" r="1.300" fill="#eee"/></svg><span>3</span></div>
    <div class="cell"><svg width="20" height="20"><circle cx="10" cy="10" r="2" fill="#eee"/></svg><span>4</span></div>
    <div class="cell"><svg width="20" height="20"><circle cx="10" cy="10" r="2" fill="#eee"/></svg><span>5</span></div>
    <div class="cell"><svg width="20" height="20"><circle cx="10" cy="10" r="3" fill="#eee"/></svg><span>7</span></div>
    <div class="cell"><svg width="20" height="20"><circle cx="10" cy="10" r="4" fill="#eee"/></svg><span>10</span></div>
    <div class="cell"><svg width="20" height="20"><circle cx="10" cy="10" r="4.500" fill="#eee"/></svg><span>12</span></div>
    <div class="cell"><svg width="20" height="20"><circle cx="10" cy="10" r="5.500" fill="#eee"/></svg><span>15</span></div>
    <div class="cell"><svg width="20" height="20"><circle cx="10" cy="10" r="7.500" fill="#eee"/></svg><span>20</span></div>
    <div class="cell"><svg width="20" height="20"><circle cx="10" cy="10" r="9" fill="#eee"/></svg><span>25</span></div>
    <div class="cell"><svg width="20" height="20"><circle cx="10" cy="10" r="9" fill="#eee"/></svg><span>30</span></div>
    <div class="cell"><svg width="20" height="20"><circle cx="10" cy="10" r="9" fill="#eee"/></svg><span>40</span></div>
    <div class="cell"><svg width="20" height="20"><circle cx="10" cy="10" r="9" fill="#eee"/></svg><span>50</span></div>
    <div class="cell"><svg width="20" height="20"><circle cx="10" cy="10" r="9" fill="#eee"/></svg><span>70</span></div>
    <div class="cell"><svg width="20" height="20"><circle cx="10" cy="10" r="9" fill="#eee"/></svg><span>100</span></div>
    <div class="cell"><svg width="20" height="20"><circle cx="10" cy="10" r="9" fill="#eee"/></svg><span>150</span></div>
    <div class="cell"><svg width="20" height="20"><circle cx="10" cy="10" r="9" fill="#eee"/></svg><span>200</span></div>
    <div class="cell"><svg width="20" height="20"><circle cx="10" cy="10" r="9" fill="#eee"/></svg><span>300</span></div>
    <div class="cell"><svg width="20" height="20"><circle cx="10" cy="10" r="9" fill="#eee"/></svg><span>400</span></div>
    <div class="cell"><svg width="20" height="20"><circle cx="10" cy="10" r="9" fill="#eee"/></svg><span>500</span></div>
    <div class="cell"><svg width="20" height="20"><circle cx="10" cy="10" r="9" fill="#eee"/></svg><span>700</span></div>
    <div class="cell"><svg width="20" height="20"><circle cx="10" cy="10" r="9" fill="#eee"/></svg><span>1000</span></div>
   </div>
   <div class="bscroll"><div class="arr u mx-auto"></div><div class="thumb tbs"></div><div class="arr d lad"></div></div>
  </div>
 </div>
</div>

<div class="status d-flex align-items-center"><span>1600 * 1200 pixel</span><span class="s1">(11.6 * 8.7cm)</span><span class="s2">350 dpi</span><span class="s3">50 %</span><span class="s4">( 750, 189 )</span></div>

<div class="task d-flex align-items-center">
 <svg class="orb" width="29" height="29" viewBox="0 0 29 29"><defs><radialGradient id="og" cx=".5" cy=".7" r=".7"><stop offset="0" stop-color="#7cc6ee"/><stop offset=".6" stop-color="#1f6fb2"/><stop offset="1" stop-color="#0d3a63"/></radialGradient></defs><circle cx="14.500" cy="14.500" r="14" fill="url(#og)"/><path d="M7 9c2 1 4 1 6.500 0v5.500c-2.500 1-4.500 1-6.500 0z" fill="#e8533a"/><path d="M15 9c2-1 4.500-1 6.500 0v5.500c-2-1-4.500-1-6.500 0z" fill="#7cc242"/><path d="M7 16c2 1 4 1 6.500 0v5.500c-2.500 1-4.500 1-6.500 0z" fill="#3aa0dc"/><path d="M15 16c2-1 4.500-1 6.500 0v5.500c-2-1-4.500-1-6.500 0z" fill="#f6c32c"/></svg>
 <div class="grip"></div>
 <svg class="tpur" width="22" height="20" viewBox="0 0 22 20"><path d="M22 1L11 10l11 9z" fill="#cdbdf0"/><path d="M0 0l13 10L0 20z" fill="#5a1fc9"/></svg>
 <svg class="tcoc" width="23" height="23" viewBox="0 0 24 24"><path d="M12 3a9 9 0 1 0 9 9h-4a5 5 0 1 1-5-5z" fill="#6ba53a"/><circle cx="12" cy="12" r="2.500" fill="#6ba53a"/><path d="M14 2l2 6M18 4l-2 5M22 8l-5 3" stroke="#e8832a" stroke-width="2"/></svg>
 <div class="tk b tchr"><svg width="24" height="24" viewBox="0 0 24 24"><circle cx="12" cy="12" r="11.500" fill="#e33b2e"/><path d="M12 12L22.200 6.500A11.500 11.500 0 0 1 12 23.500z" fill="#fbc02d"/><path d="M12 12L12 23.500A11.500 11.500 0 0 1 1.800 6.500z" fill="#2ca24c"/><circle cx="12" cy="12" r="5.500" fill="#fff"/><circle cx="12" cy="12" r="4.300" fill="#3f82ee"/></svg></div>
 <div class="tk b"><svg width="23" height="23" viewBox="0 0 23 23"><rect x=".5" y=".5" width="22" height="22" rx="5" fill="#f0f0f2"/><circle cx="11.500" cy="11.500" r="7" fill="#19b5c4"/><path d="M11.500 4.500A7 7 0 0 0 4.500 11.500h7z" fill="#e6402a"/><path d="M11.500 4.500a7 7 0 0 1 6 4l-6 3z" fill="#f6c32c"/><path d="M4.500 11.500a7 7 0 0 0 7 7v-7z" fill="#21b26a"/></svg></div>
 <div class="tk b"><svg width="28" height="26" viewBox="0 0 28 26"><ellipse cx="12" cy="15" rx="11" ry="9" fill="#b9d6ec" stroke="#7fa9c9"/><circle cx="6" cy="13" r="2" fill="#e34a3a"/><circle cx="10" cy="9" r="2" fill="#5db04a"/><circle cx="15" cy="9" r="2" fill="#e8c02a"/><circle cx="9" cy="19" r="2" fill="#3a7fd0"/><path d="M24 2l2 1-9 19-3 1 1-3z" fill="#d9953a"/></svg></div>
 <div class="ssq ms-auto"></div>
 <span class="tray">I N</span>
 <svg class="tcar" width="9" height="6"><path d="M1 5h7L4.500 1z" fill="#aaa"/></svg>
 <div class="clk">7:43 AM<br>6/10/2021</div>
 <div class="shd"></div>
</div>
</body></html>
